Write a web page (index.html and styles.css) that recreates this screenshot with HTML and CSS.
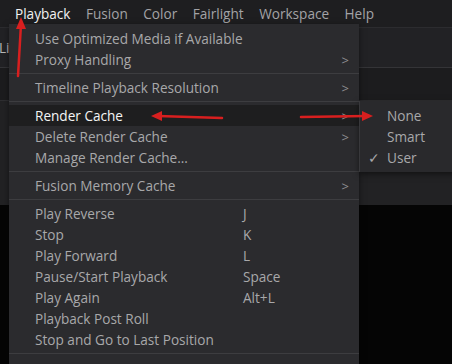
FILE: index.html
```html
<!DOCTYPE html>
<html lang="en">
<head>
  <meta charset="UTF-8" />
  <title>Playback Menu</title>
  <link rel="stylesheet" href="styles.css">
</head>
<body>

  <div class="menubar">
    <span class="top-item active">Playback</span>
    <span class="top-item">Fusion</span>
    <span class="top-item">Color</span>
    <span class="top-item">Fairlight</span>
    <span class="top-item">Workspace</span>
    <span class="top-item">Help</span>
  </div>

  <div class="toolbar"><span class="cut-label">Li</span></div>
  <div class="panel"></div>
  <div class="viewer"></div>

  <!-- dropdown -->
  <div class="menu">
    <div class="row"><span class="label">Use Optimized Media if Available</span></div>
    <div class="row"><span class="label">Proxy Handling</span><span class="chev">&gt;</span></div>
    <div class="sep"></div>
    <div class="row"><span class="label">Timeline Playback Resolution</span><span class="chev">&gt;</span></div>
    <div class="sep"></div>
    <div class="row hover"><span class="label">Render Cache</span><span class="chev">&gt;</span></div>
    <div class="row"><span class="label">Delete Render Cache</span><span class="chev">&gt;</span></div>
    <div class="row"><span class="label">Manage Render Cache...</span></div>
    <div class="sep"></div>
    <div class="row"><span class="label">Fusion Memory Cache</span><span class="chev">&gt;</span></div>
    <div class="sep"></div>
    <div class="row"><span class="label">Play Reverse</span><span class="key">J</span></div>
    <div class="row"><span class="label">Stop</span><span class="key">K</span></div>
    <div class="row"><span class="label">Play Forward</span><span class="key">L</span></div>
    <div class="row"><span class="label">Pause/Start Playback</span><span class="key">Space</span></div>
    <div class="row"><span class="label">Play Again</span><span class="key">Alt+L</span></div>
    <div class="row"><span class="label">Playback Post Roll</span></div>
    <div class="row"><span class="label">Stop and Go to Last Position</span></div>
    <div class="sep"></div>
  </div>

  <div class="submenu">
    <div class="row"><span class="check"></span><span class="label">None</span></div>
    <div class="row"><span class="check"></span><span class="label">Smart</span></div>
    <div class="row"><span class="check">&#10003;</span><span class="label">User</span></div>
  </div>

  <!-- red annotation arrows -->
  <svg class="arrows" width="452" height="364" viewBox="0 0 452 364">
    <g stroke="#d81f1f" stroke-width="2.5" stroke-linecap="round" fill="none">
      <line x1="18" y1="76" x2="21" y2="24" />
      <line x1="222" y1="118" x2="158" y2="116" />
      <line x1="301" y1="117" x2="366" y2="116" />
    </g>
    <g fill="#d81f1f">
      <polygon points="21,17 16,29 26,29" />
      <polygon points="151,116 162,111 162,121" />
      <polygon points="373,116 362,111 362,121" />
    </g>
  </svg>

</body>
</html>
```

FILE: styles.css
```css
body {
  margin: 0;
  width: 452px;
  height: 364px;
  overflow: hidden;
  background: #050505;
  font-family: "Open Sans", "Liberation Sans", sans-serif;
  font-size: 13.6px;
  position: relative;
}

.menubar {
  height: 28px;
  background: #1e1e20;
  border-bottom: 1px solid #2c2c2f;
  display: flex;
  align-items: center;
  gap: 15.5px;
  padding-left: 15px;
  box-sizing: border-box;
}

.top-item {
  color: #a3a3a6;
  line-height: 28px;
}

.top-item.active {
  color: #f2f2f2;
}

.toolbar {
  height: 39px;
  background: #222225;
  border-bottom: 1px solid #343437;
  display: flex;
  align-items: center;
}

.cut-label {
  color: #b8b8b8;
  margin-left: -1px;
}

.panel {
  height: 32px;
  background: #1c1c1e;
  border-bottom: 1px solid #2e2e31;
}

.viewer {
  height: 104px;
  background: #222224;
}

.menu {
  position: absolute;
  left: 9px;
  top: 24px;
  width: 350px;
  padding: 4px 0 20px;
  background: #2b2b2e;
  box-shadow: 0 2px 6px rgba(0,0,0,0.5);
}

.row {
  height: 21px;
  display: flex;
  align-items: center;
  color: #a8a8aa;
  position: relative;
  padding-left: 26px;
}

.row .label {
  white-space: nowrap;
}

.row.hover {
  background: #1e1e1f;
  color: #f4f4f4;
}

.key {
  position: absolute;
  left: 234px;
}

.chev {
  position: absolute;
  right: 10px;
  color: #8e8e91;
  font-size: 13px;
}

.sep {
  height: 7px;
  display: flex;
  align-items: center;
}

.sep::after {
  content: "";
  flex: 1;
  height: 1px;
  background: #3d3d40;
}

.submenu {
  position: absolute;
  left: 359px;
  top: 101px;
  width: 100px;
  padding: 4px 0;
  background: #29292c;
  border-left: 1px solid #38383b;
  box-shadow: 0 2px 6px rgba(0,0,0,0.5);
}

.submenu .row {
  padding-left: 8px;
}

.check {
  width: 19px;
  color: #a8a8aa;
  font-size: 14px;
}

.arrows {
  position: absolute;
  left: 0;
  top: 0;
  pointer-events: none;
}
```
